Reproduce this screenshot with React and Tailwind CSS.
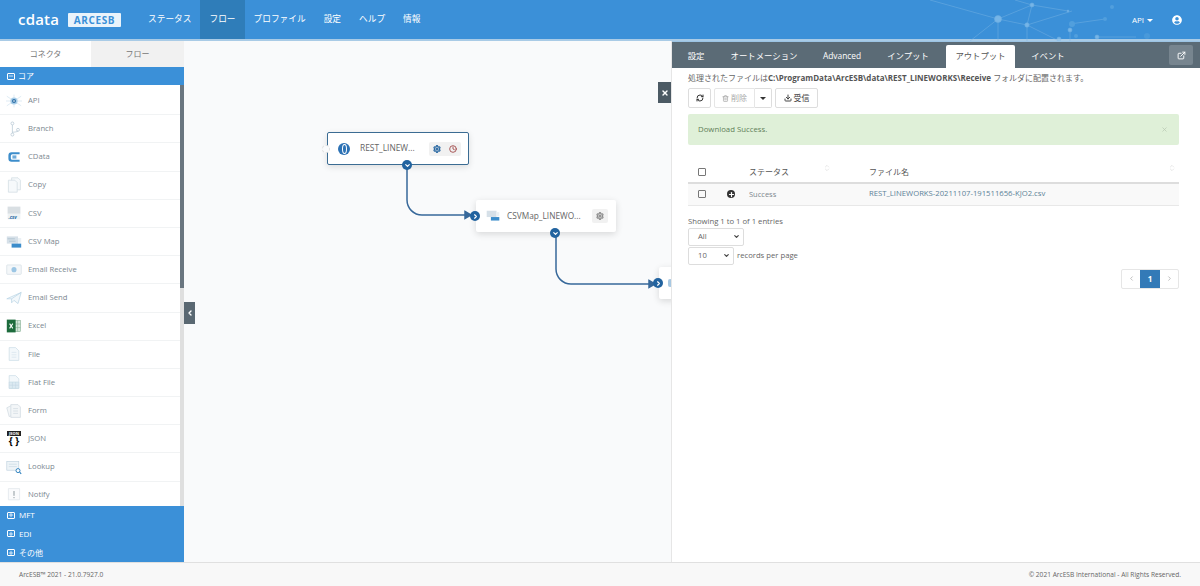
import { ChevronDown, ChevronLeft, ChevronRight, ChevronsUpDown, Clock, Download, ExternalLink, Plus, RefreshCw, Settings, Trash2, X, Minus } from 'lucide-react'
import { FaUserCircle } from 'react-icons/fa'

const FONT = "font-['Open_Sans','Noto_Sans_CJK_JP',sans-serif]"

const navItems = ['ステータス', 'フロー', 'プロファイル', '設定', 'ヘルプ', '情報']

function DocIcon({ children }) {
  return (
    <svg width="20" height="20" viewBox="0 0 20 20" fill="none">
      <path d="M4 2h8l4 4v12H4z" fill="#f3f8fb" stroke="#cfdfe8" />
      {children}
    </svg>
  )
}

const icons = {
  API: (
    <svg width="20" height="20" viewBox="0 0 20 20" fill="none" stroke="#c5dcec" strokeWidth=".7">
      <path d="M1 4l18 12M1 16L19 4M0 10h20M10 2v16" />
      <circle cx="10" cy="10" r="4.500" fill="#a8cde8" stroke="none" />
      <circle cx="10" cy="10" r="2.500" fill="#2c6ea6" stroke="none" />
      <circle cx="10" cy="10" r="1" fill="#fff" stroke="none" />
    </svg>
  ),
  Branch: (
    <svg width="20" height="20" viewBox="0 0 20 20" fill="none" stroke="#b4c6d2" strokeWidth=".9">
      <circle cx="8" cy="3" r="1.800" /><circle cx="8" cy="17" r="1.800" /><circle cx="15" cy="11" r="1.800" />
      <path d="M8 5v10M8 14c3 0 6-.5 7-1.500" />
    </svg>
  ),
  CData: (
    <svg width="20" height="20" viewBox="0 0 20 20" fill="none">
      <path d="M17 4H7a4 4 0 0 0-4 4v4a4 4 0 0 0 4 4h10v-2.500H8a2 2 0 0 1-2-2V8.500a2 2 0 0 1 2-2h9z" fill="#3c8dcb" />
      <path d="M8 8h5v4H8z" fill="#3c8dcb" opacity=".75" />
    </svg>
  ),
  Copy: (
    <svg width="20" height="20" viewBox="0 0 20 20" fill="#f6f9fb" stroke="#cfdbe2" strokeWidth=".9">
      <path d="M7 1h8l3 3v12H7z" />
      <path d="M3 4h8l3 3v12H3z" />
    </svg>
  ),
  CSV: (
    <svg width="20" height="20" viewBox="0 0 20 20" fill="none">
      <rect x="2" y="2" width="16" height="9" fill="#d9dfe3" />
      <rect x="2" y="11" width="16" height="7" fill="#eef2f4" />
      <text x="3" y="17.500" fontSize="6" fontWeight="700" fontStyle="italic" fill="#2c6ea6" fontFamily="Open Sans">.csv</text>
    </svg>
  ),
  'CSV Map': (
    <svg width="20" height="20" viewBox="0 0 20 20" fill="none">
      <rect x="1" y="3" width="14" height="9" fill="#d6e0e8" />
      <path d="M2 6h9M4 9h8" stroke="#9fb6c7" strokeWidth=".8" />
      <rect x="7" y="12" width="12" height="5" fill="#3c8dcb" />
      <rect x="15" y="5" width="4" height="6" fill="#eaf0f4" />
    </svg>
  ),
  'Email Receive': (
    <svg width="22" height="20" viewBox="0 0 22 20" fill="none">
      <rect x="1" y="3" width="20" height="13" rx="1" fill="#f4f7f9" stroke="#d5dfe5" />
      <circle cx="11" cy="9.500" r="3.500" fill="#9cc6e4" />
    </svg>
  ),
  'Email Send': (
    <svg width="20" height="20" viewBox="0 0 20 20" fill="#f3f8fb" stroke="#b8d4e5" strokeWidth=".9">
      <path d="M1 11L19 3l-4 14-5-4-3 3v-5z" />
      <path d="M7 11L19 3" />
    </svg>
  ),
  Excel: (
    <svg width="20" height="20" viewBox="0 0 20 20" fill="none">
      <rect x="8" y="3" width="10" height="14" fill="#d4e6da" stroke="#7aa98a" strokeWidth=".7" />
      <path d="M11 3v14M14.500 3v14M8 7.500h10M8 12h10" stroke="#7aa98a" strokeWidth=".7" />
      <rect x="1" y="2" width="11" height="16" fill="#1d6b3c" />
      <path d="M4.500 7l4 6M8.500 7l-4 6" stroke="#fff" strokeWidth="1.300" />
    </svg>
  ),
  File: <DocIcon><path d="M7 8h6M7 11h6M7 14h6" stroke="#d3e1ea" strokeWidth=".8" /></DocIcon>,
  'Flat File': <DocIcon><path d="M4 10h12v8H4zM8 10v8M12 10v8M4 14h12" fill="#dceaf2" stroke="#c3d8e4" strokeWidth=".7" /></DocIcon>,
  Form: (
    <svg width="20" height="20" viewBox="0 0 20 20" fill="#f3f6f8" stroke="#cfdae0" strokeWidth=".9">
      <path d="M1 6l6-3 2 12-5 2z" />
      <path d="M6 2h9l3 3v13H6z" />
      <path d="M9 7h6M9 10h6M9 13h6" />
    </svg>
  ),
  JSON: (
    <div className="flex w-[14px] flex-col items-center leading-none">
      <span className="w-full bg-[#222] text-center text-[4px] leading-[5px] font-bold text-white">JSON</span>
      <span className="text-[10px] leading-[11px] font-bold text-black">{'{ }'}</span>
    </div>
  ),
  Lookup: (
    <svg width="20" height="20" viewBox="0 0 20 20" fill="none">
      <rect x="1" y="3" width="15" height="11" fill="#eef4f8" stroke="#bcd0dd" strokeWidth=".8" />
      <path d="M3.500 6.500h10M3.500 9.500h10" stroke="#c5d6e1" strokeWidth=".8" />
      <circle cx="15" cy="14.500" r="2.500" fill="#fff" stroke="#2c7fbd" strokeWidth="1.200" />
      <path d="M17 16.500l2 2" stroke="#2c7fbd" strokeWidth="1.400" />
    </svg>
  ),
  Notify: (
    <svg width="20" height="20" viewBox="0 0 20 20" fill="none">
      <path d="M3 2h14v14H3z" fill="#fafbfc" stroke="#e1e7eb" />
      <path d="M10 5v6M10 12.500v1.500" stroke="#8a959c" strokeWidth="1.200" />
    </svg>
  ),
}

const connectors = ['API', 'Branch', 'CData', 'Copy', 'CSV', 'CSV Map', 'Email Receive', 'Email Send', 'Excel', 'File', 'Flat File', 'Form', 'JSON', 'Lookup', 'Notify']
const outputTabs = ['設定', 'オートメーション', 'Advanced', 'インプット', 'アウトプット', 'イベント']
const tabWidths = ['w-[44px]', 'w-[92px]', 'w-[64px]', 'w-[68px]', 'ml-[4px] w-[69px]', 'w-[66px]']

function PortIn({ className }) {
  return (
    <span className={`absolute flex h-[10px] w-[10px] items-center justify-center rounded-full bg-[#22639f] text-white ${className}`}>
      <ChevronRight size={7} strokeWidth={4} />
    </span>
  )
}

function PortOut({ className }) {
  return (
    <span className={`absolute flex h-[10px] w-[10px] items-center justify-center rounded-full bg-[#22639f] text-white ${className}`}>
      <ChevronDown size={7} strokeWidth={4} />
    </span>
  )
}

function Network() {
  return (
    <svg width="300" height="41" viewBox="0 0 300 41" className="absolute top-0 right-0 opacity-70" fill="#8fc5ee" stroke="#7fb8e6" strokeWidth=".6">
      <path d="M98 19L132 5l-5 20L98 19L70 41M132 5l36 6M127 25l45-14M127 25l32 16M127 25v16M170 24l35-5M170 30v11M196 37h40M98 19V41M30 0l68 19M115 0l17 5" fill="none" />
      <circle cx="98" cy="19" r="3.500" />
      <circle cx="132" cy="5" r="2" />
      <circle cx="127" cy="25" r="2.200" />
      <circle cx="168" cy="11" r="1" />
      <circle cx="159" cy="39" r="2" />
      <circle cx="170" cy="30" r="2" />
      <circle cx="172" cy="24" r="3" fill="#5ba6e0" stroke="none" />
      <circle cx="212" cy="7" r="2" fill="#5ba6e0" stroke="none" />
      <circle cx="205" cy="19" r="2" fill="#5ba6e0" stroke="none" />
      <circle cx="176" cy="36" r="2" fill="#5ba6e0" stroke="none" />
      <circle cx="197" cy="37" r="2" />
      <circle cx="247" cy="36" r="3" fill="#4f9ddb" stroke="none" />
    </svg>
  )
}

export default function App() {
  return (
    <div className={`flex h-[586px] w-[1200px] flex-col overflow-hidden bg-white text-[8px] text-[#666] ${FONT}`}>
      {/* Top bar */}
      <header className="relative flex h-[41px] shrink-0 items-stretch border-b-2 border-[#a9cbe6] bg-[#3b90d8] pl-[18px] text-white">
        <Network />
        <div className="flex w-[121px] items-center gap-[5px]">
          <span className="w-[45px] text-[15px] leading-none font-semibold tracking-[.2px]">cdata</span>
          <span className="w-[53px] rounded-[1px] bg-[#e9f3fb] py-[1px] text-center text-[10px] leading-[12px] font-bold tracking-[.6px] text-[#3b90d8]">ARCESB</span>
        </div>
        <nav className="flex text-[8.700px]">
          {navItems.map(item => (
            <a key={item} className={`flex items-center px-[9px] ${item === 'フロー' ? 'bg-[#2f7db9]' : ''}`}>{item}</a>
          ))}
        </nav>
        <div className="relative ml-auto flex items-center gap-[19px] pr-[18px]">
          <span className="flex items-center gap-[3px] text-[8px]">API<span className="mt-[1px] h-0 w-0 border-x-[3px] border-t-[3px] border-x-transparent border-t-white" /></span>
          <FaUserCircle size={10} />
        </div>
      </header>

      <div className="flex min-h-0 flex-1">
        {/* Connector palette */}
        <aside className="flex w-[184px] shrink-0 flex-col">
          <div className="flex h-[26px] shrink-0">
            <div className="flex w-[91px] items-center justify-center bg-white text-[#777]">コネクタ</div>
            <div className="flex flex-1 items-center justify-center bg-[#f1f1f1] text-[#777]">フロー</div>
          </div>
          <div className="flex h-[18px] shrink-0 items-center gap-[3px] bg-[#3b90d8] pl-[7px] text-white">
            <span className="flex h-[7px] w-[8px] items-center justify-center rounded-[1px] border border-white"><Minus size={6} strokeWidth={3} /></span>
            コア
          </div>
          <div className="flex min-h-0 flex-1">
            <div className="min-w-0 flex-1 overflow-hidden pt-[2px]">
              {connectors.map(name => (
                <div key={name} className="flex h-[28.2px] items-center border-b border-[#f1f3f4]">
                  <span className="flex w-[28px] shrink-0 items-center justify-center [&>svg]:h-[16px] [&>svg]:w-[16px]">{icons[name]}</span>
                  <span className="text-[7.700px] text-[#7b8790]">{name}</span>
                </div>
              ))}
            </div>
            <div className="w-[4px] shrink-0 bg-[#dfdfdf]">
              <div className="h-[203px] bg-[#6a7680]" />
            </div>
          </div>
          <div className="flex h-[56px] shrink-0 flex-col justify-around bg-[#3b90d8] pl-[7px] text-white">
            {['MFT', 'EDI', 'その他'].map(name => (
              <div key={name} className="flex items-center gap-[4px]">
                <span className="flex h-[7px] w-[8px] items-center justify-center rounded-[1px] border border-white"><Plus size={6} strokeWidth={3} /></span>
                {name}
              </div>
            ))}
          </div>
        </aside>

        {/* Flow canvas */}
        <main className="relative w-[488px] shrink-0 overflow-hidden border-r border-[#e6e6e6] bg-[#f9fafb]">
          <button className="absolute top-[261px] left-0 flex h-[22px] w-[11px] items-center justify-center bg-[#5a6872] text-white">
            <ChevronLeft size={8} strokeWidth={4} />
          </button>
          <button className="absolute top-[41px] right-0 flex h-[21px] w-[13px] items-center justify-center bg-[#4c5a64] text-white">
            <X size={8} strokeWidth={4} />
          </button>

          <svg width="487" height="521" className="absolute top-0 left-0" fill="none" stroke="#37689a" strokeWidth="1.500">
            <path d="M223 122v37a15 15 0 0 0 15 15h47" />
            <path d="M281 170.500l6 3.500-6 3.500z" fill="#37689a" />
            <path d="M372 193v35a15 15 0 0 0 15 15h82" />
            <path d="M465 239.500l6 3.500-6 3.500z" fill="#37689a" />
          </svg>

          <div className="absolute top-[91px] left-[143px] flex h-[33px] w-[142px] items-center rounded-[2px] border border-[#3b6c93] bg-white shadow-[0_2px_6px_rgba(0,0,0,.12)]">
            <span className="absolute top-[12px] -left-[6px] h-[8px] w-[8px] rounded-full border border-dashed border-[#e2e2e2] bg-[#f9fafb]" />
            <span className="ml-[10px] flex h-[12px] w-[12px] items-center justify-center rounded-full bg-[#2d72b5]">
              <span className="h-[10px] w-[5px] rounded-[50%] border border-white" />
            </span>
            <span className="ml-[10px] w-[69px] text-[8.400px] text-[#666]">REST_LINEW...</span>
            <span className="flex h-[14px] w-[32px] items-center justify-around rounded-[2px] bg-[#f1f1f1]">
              <Settings size={8} strokeWidth={3.500} className="text-[#22639f]" />
              <Clock size={8} strokeWidth={2.500} className="text-[#9c3f3f]" />
            </span>
            <PortOut className="-bottom-[6px] left-[74px]" />
          </div>

          <div className="absolute top-[159px] left-[292px] flex h-[32px] w-[140px] items-center rounded-[2px] bg-white shadow-[0_2px_7px_rgba(0,0,0,.14)]">
            <PortIn className="top-[11px] -left-[6px]" />
            <span className="ml-[10px] flex w-[14px] justify-center">
              <svg width="14" height="12" viewBox="0 0 20 17" fill="none">
                <rect x="1" y="1" width="14" height="9" fill="#d6e0e8" />
                <rect x="7" y="10" width="12" height="5" fill="#3c8dcb" />
                <rect x="15" y="3" width="4" height="6" fill="#eaf0f4" />
              </svg>
            </span>
            <span className="ml-[7px] w-[85px] text-[8.300px] text-[#666]">CSVMap_LINEWO...</span>
            <span className="flex h-[14px] w-[16px] items-center justify-center rounded-[2px] bg-[#f1f1f1]">
              <Settings size={8} strokeWidth={3.500} className="text-[#888]" />
            </span>
            <PortOut className="-bottom-[6px] left-[74px]" />
          </div>

          <div className="absolute top-[226px] left-[475px] flex h-[32px] w-[40px] items-center rounded-[2px] bg-white shadow-[0_2px_7px_rgba(0,0,0,.14)]">
            <PortIn className="top-[11px] -left-[6px]" />
            <span className="ml-[9px] h-[8px] w-[4px] rounded-full bg-[#a7c8e2]" />
          </div>
        </main>

        {/* Detail panel */}
        <section className="flex min-w-0 flex-1 flex-col">
          <div className="relative flex h-[27px] shrink-0 items-end border-t border-[#9cc4e4] bg-[#5b6b76] pl-[2px] text-[8.400px] text-white">
            {outputTabs.map((tab, i) => (
              <span key={tab} className={`flex h-[23px] items-center justify-center rounded-t-[2px] ${tabWidths[i]} ${tab === 'アウトプット' ? 'bg-white text-[#555]' : ''}`}>{tab}</span>
            ))}
            <span className="absolute top-[3px] right-[7px] flex h-[20px] w-[24px] items-center justify-center rounded-[2px] bg-[#77858f]">
              <ExternalLink size={9} strokeWidth={2.500} />
            </span>
          </div>

          <div className="flex flex-1 flex-col pr-[21px] pl-[16px]">
            <p className="mt-[3px] text-[8px] leading-[14px] text-[#666]">
              処理されたファイルは<b className="text-[#555]">C:\ProgramData\ArcESB\data\REST_LINEWORKS\Receive</b> フォルダに配置されます。
            </p>
            <div className="mt-[3px] flex h-[20px] text-[8px]">
              <button className="flex w-[23px] items-center justify-center rounded-[2px] border border-[#ddd] text-[#333]"><RefreshCw size={8} strokeWidth={3} /></button>
              <button className="ml-[3px] flex w-[41px] items-center justify-center gap-[2px] rounded-l-[2px] border border-[#e6e6e6] text-[#aaa]"><Trash2 size={7} strokeWidth={2.500} />削除</button>
              <button className="flex w-[17px] items-center justify-center rounded-r-[2px] border border-l-0 border-[#ddd]"><span className="h-0 w-0 border-x-[3px] border-t-[3px] border-x-transparent border-t-[#333]" /></button>
              <button className="ml-[3px] flex w-[43px] items-center justify-center gap-[2px] rounded-[2px] border border-[#ddd] text-[#444]"><Download size={8} strokeWidth={3} />受信</button>
            </div>
            <div className="mt-[6px] flex h-[31px] items-center justify-between rounded-[2px] bg-[#dff0d8] pr-[11px] pl-[10px] text-[7.800px] text-[#5f8058]">
              Download Success.
              <X size={7} strokeWidth={2.500} className="text-[#b9c9b3]" />
            </div>

            <table className="mt-[16px] w-full table-fixed border-collapse">
              <thead>
                <tr className="h-[22px] border-b-2 border-[#ddd] text-[8px] text-[#555]">
                  <th className="w-[29px] pl-[10px] text-left"><span className="block h-[8px] w-[8px] rounded-[1px] border border-[#777]" /></th>
                  <th className="w-[32px]" />
                  <th className="relative w-[120px] text-left font-normal">ステータス<ChevronsUpDown size={8} className="absolute top-[3px] right-[38px] text-[#ddd]" /></th>
                  <th className="relative text-left font-normal">ファイル名<ChevronsUpDown size={8} className="absolute top-[3px] right-[3px] text-[#ddd]" /></th>
                </tr>
              </thead>
              <tbody>
                <tr className="h-[22px] border-b border-[#e8e8e8] bg-[#f9f9f9] text-[7.700px]">
                  <td className="pl-[10px]"><span className="block h-[8px] w-[8px] rounded-[1px] border border-[#777]" /></td>
                  <td className="pl-[10px]">
                    <span className="flex h-[8px] w-[8px] items-center justify-center rounded-full bg-[#333] text-white"><Plus size={7} strokeWidth={4} /></span>
                  </td>
                  <td className="text-[7.500px] text-[#7e888e]">Success</td>
                  <td className="text-[#5b8298]">REST_LINEWORKS-20211107-191511656-KJO2.csv</td>
                </tr>
              </tbody>
            </table>

            <p className="mt-[9px] text-[7.700px] leading-[12px]">Showing 1 to 1 of 1 entries</p>
            <div className="mt-[1px] flex h-[18px] w-[56px] items-center justify-between rounded-[2px] border border-[#ddd] pr-[3px] pl-[9px] text-[7.700px]">All<ChevronDown size={7} strokeWidth={4} className="text-[#444]" /></div>
            <div className="mt-[1px] flex items-center gap-[3px] text-[7.700px]">
              <div className="flex h-[18px] w-[46px] items-center justify-between rounded-[2px] border border-[#ddd] pr-[3px] pl-[9px]">10<ChevronDown size={7} strokeWidth={4} className="text-[#444]" /></div>
              records per page
            </div>
            <div className="mt-[4px] flex justify-end">
              <div className="flex h-[20px] overflow-hidden rounded-[2px] border border-[#e6e6e6] text-[8px]">
                <span className="flex w-[18px] items-center justify-center text-[#aaa]"><ChevronLeft size={7} strokeWidth={2.500} /></span>
                <span className="flex w-[20px] items-center justify-center bg-[#337ab7] font-bold text-white">1</span>
                <span className="flex w-[18px] items-center justify-center text-[#aaa]"><ChevronRight size={7} strokeWidth={2.500} /></span>
              </div>
            </div>
          </div>
        </section>
      </div>

      <footer className="flex h-[24px] shrink-0 items-center justify-between border-t border-[#e0e0e0] bg-[#f8f8f8] pr-[19px] pl-[19px] text-[6.600px] text-[#666]">
        <span>ArcESB™ 2021 - 21.0.7927.0</span>
        <span>© 2021 ArcESB International - All Rights Reserved.</span>
      </footer>
    </div>
  )
}
